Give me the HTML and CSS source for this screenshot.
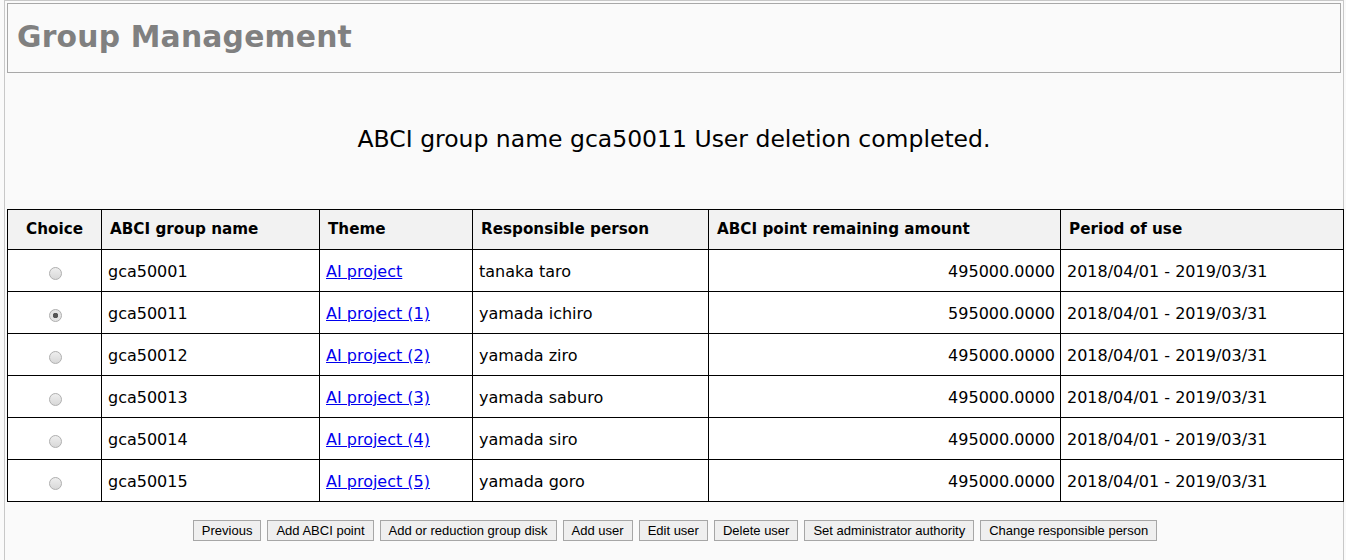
FILE: index.html
```html
<!DOCTYPE html>
<html>
<head>
<meta charset="utf-8">
<link rel="stylesheet" href="styles.css">
</head>
<body>
<div class="page">
  <div class="header"><h1 class="title">Group Management</h1></div>
  <p class="message">ABCI group name gca50011 User deletion completed.</p>
  <table class="grid">
    <colgroup>
      <col class="c1"><col class="c2"><col class="c3"><col class="c4"><col class="c5"><col class="c6">
    </colgroup>
    <thead>
      <tr><th class="center">Choice</th><th>ABCI group name</th><th>Theme</th><th>Responsible person</th><th>ABCI point remaining amount</th><th>Period of use</th></tr>
    </thead>
    <tbody>
      <tr><td class="center"><span class="radio"></span></td><td>gca50001</td><td><a href="#">AI project</a></td><td>tanaka taro</td><td class="num">495000.0000</td><td>2018/04/01 - 2019/03/31</td></tr>
      <tr><td class="center"><span class="radio checked"></span></td><td>gca50011</td><td><a href="#">AI project (1)</a></td><td>yamada ichiro</td><td class="num">595000.0000</td><td>2018/04/01 - 2019/03/31</td></tr>
      <tr><td class="center"><span class="radio"></span></td><td>gca50012</td><td><a href="#">AI project (2)</a></td><td>yamada ziro</td><td class="num">495000.0000</td><td>2018/04/01 - 2019/03/31</td></tr>
      <tr><td class="center"><span class="radio"></span></td><td>gca50013</td><td><a href="#">AI project (3)</a></td><td>yamada saburo</td><td class="num">495000.0000</td><td>2018/04/01 - 2019/03/31</td></tr>
      <tr><td class="center"><span class="radio"></span></td><td>gca50014</td><td><a href="#">AI project (4)</a></td><td>yamada siro</td><td class="num">495000.0000</td><td>2018/04/01 - 2019/03/31</td></tr>
      <tr><td class="center"><span class="radio"></span></td><td>gca50015</td><td><a href="#">AI project (5)</a></td><td>yamada goro</td><td class="num">495000.0000</td><td>2018/04/01 - 2019/03/31</td></tr>
    </tbody>
  </table>
  <div class="actions">
    <button class="btn">Previous</button>
    <button class="btn">Add ABCI point</button>
    <button class="btn">Add or reduction group disk</button>
    <button class="btn">Add user</button>
    <button class="btn">Edit user</button>
    <button class="btn">Delete user</button>
    <button class="btn">Set administrator authority</button>
    <button class="btn">Change responsible person</button>
  </div>
</div>
</body>
</html>
```
FILE: styles.css
```css
html, body {
  margin: 0;
  padding: 0;
  background: #fafafa;
}
body {
  font-family: "DejaVu Sans", Verdana, sans-serif;
  color: #000;
}
.page {
  margin-left: 4px;
  width: 1340px;
  border-left: 1px solid #c8c8c8;
  border-right: 1px solid #c8c8c8;
  border-top: 1px solid #c8c8c8;
  min-height: 570px;
  padding: 2px 2px 0 2px;
  box-sizing: border-box;
}
.header {
  border: 1px solid #a8a8a8;
  height: 70px;
  box-sizing: border-box;
  padding-left: 9px;
  padding-bottom: 4px;
  display: flex;
  align-items: center;
}
.title {
  margin: 0;
  font-size: 29.8px;
  font-weight: bold;
  color: #808080;
  letter-spacing: 0.2px;
}
.message {
  margin: 0;
  height: 136px;
  display: flex;
  align-items: center;
  justify-content: center;
  font-size: 23.5px;
  padding-bottom: 4px;
  box-sizing: border-box;
}
.grid {
  border-collapse: collapse;
  width: 1336px;
  table-layout: fixed;
  font-size: 16px;
}
.c1 { width: 94px; }
.c2 { width: 218px; }
.c3 { width: 153px; }
.c4 { width: 236px; }
.c5 { width: 352px; }
.c6 { width: 283px; }
.grid th, .grid td {
  border: 1px solid #000;
  padding: 0 6px;
  text-align: left;
  white-space: nowrap;
  overflow: hidden;
}
.grid th {
  background: #f2f2f2;
  height: 38px;
  font-size: 15.2px;
  font-weight: bold;
  padding-left: 8px;
  padding-bottom: 1px;
}
.grid td {
  background: #fff;
  height: 39px;
  padding-top: 2px;
}
.grid .center { text-align: center; padding-left: 6px; }
.grid .num { text-align: right; padding-right: 5px; }
.grid a { color: #0000ee; }
.radio {
  display: inline-block;
  width: 11px;
  height: 11px;
  border-radius: 50%;
  border: 1px solid #b0b0b0;
  background: linear-gradient(#eeeeee, #d8d8d8);
  vertical-align: middle;
  position: relative;
  top: 1px;
  left: 1px;
}
.radio.checked {
  background: radial-gradient(circle, #555 0 2.5px, #e4e4e4 3px);
}
.actions {
  display: flex;
  justify-content: center;
  gap: 6px;
  padding-top: 18px;
  padding-left: 2px;
}
.btn {
  font-family: "Liberation Sans", Arial, sans-serif;
  font-size: 13px;
  color: #000;
  background: #efefef;
  border: 1px solid #a6a6a6;
  border-radius: 0;
  height: 21px;
  padding: 0 8px;
  margin: 0;
}
```
